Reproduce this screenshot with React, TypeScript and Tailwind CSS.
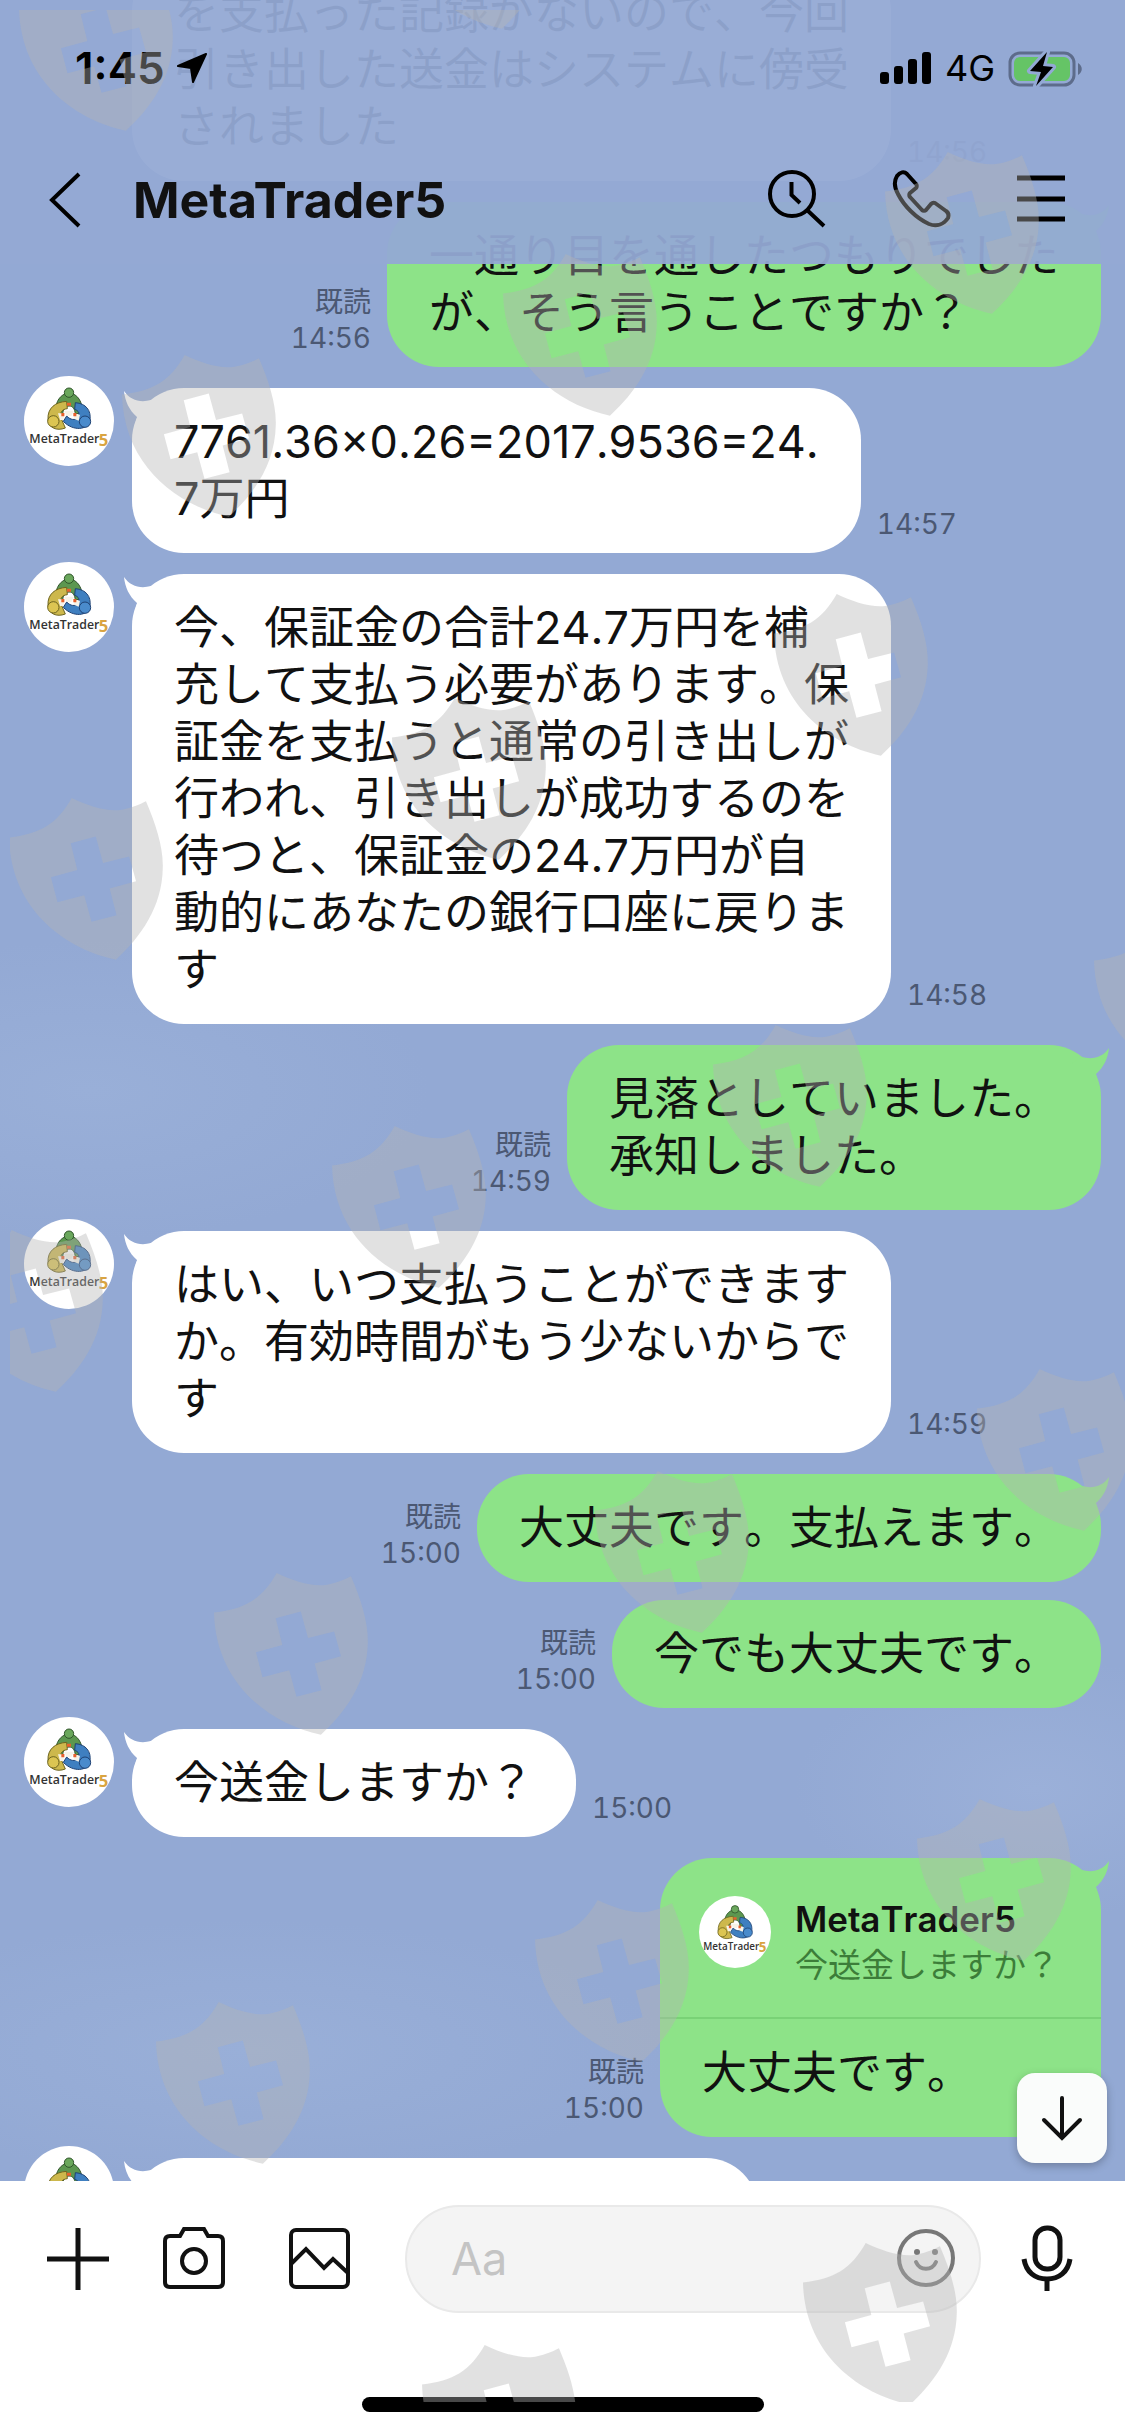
import type { ReactNode } from 'react'

type Message = {
  from: 'me' | 'them'
  text: string
  time: string
  follows?: boolean
  quote?: { name: string; text: string }
}

const messages: Message[] = [
  {
    from: 'them',
    text: 'を支払った記録がないので、今回\n引き出した送金はシステムに傍受\nされました',
    time: '14:56',
    follows: true,
  },
  {
    from: 'me',
    text: '一通り目を通したつもりでした\nが、そう言うことですか？',
    time: '14:56',
  },
  { from: 'them', text: '7761.36×0.26=2017.9536=24.\n7万円', time: '14:57' },
  {
    from: 'them',
    text: '今、保証金の合計24.7万円を補\n充して支払う必要があります。保\n証金を支払うと通常の引き出しが\n行われ、引き出しが成功するのを\n待つと、保証金の24.7万円が自\n動的にあなたの銀行口座に戻りま\nす',
    time: '14:58',
  },
  { from: 'me', text: '見落としていました。\n承知しました。', time: '14:59' },
  {
    from: 'them',
    text: 'はい、いつ支払うことができます\nか。有効時間がもう少ないからで\nす',
    time: '14:59',
  },
  { from: 'me', text: '大丈夫です。支払えます。', time: '15:00' },
  { from: 'me', text: '今でも大丈夫です。', time: '15:00', follows: true },
  { from: 'them', text: '今送金しますか？', time: '15:00' },
  {
    from: 'me',
    text: '大丈夫です。',
    time: '15:00',
    quote: { name: 'MetaTrader5', text: '今送金しますか？' },
  },
]

const shields = [
  [394, -133], [18, -31], [884, 152], [502, 254], [121, 355], [773, 594], [391, 698],
  [8, 798], [1093, 921], [712, 1025], [331, 1126], [-52, 1230], [976, 1369], [594, 1471],
  [213, 1573], [916, 1799], [534, 1900], [155, 2002], [802, 2243], [421, 2345],
]

function Avatar({ className }: { className: string }) {
  return (
    <svg viewBox="0 0 270 270" className={`shrink-0 rounded-full bg-white ${className}`} role="img" aria-label="MetaTrader 5">
      <g stroke="#31552c" strokeWidth="3">
        <path d="M135 50 C108 54 94 78 95 106 L116 118 C116 98 124 90 135 90 C147 90 152 98 154 114 L175 110 C176 78 162 54 135 50Z" fill="#5c9750" />
        <circle cx="135" cy="50" r="14" fill="#6aa75c" />
      </g>
      <g stroke="#6d6420" strokeWidth="3">
        <path d="M72 130 C70 96 94 78 128 76 L130 98 C114 100 108 108 110 124 L124 156 C98 166 74 156 72 130Z" fill="#cdb84c" />
        <circle cx="88" cy="136" r="17" fill="#dcc552" />
      </g>
      <g stroke="#1f4274" strokeWidth="3">
        <path d="M154 80 C186 82 202 104 198 132 C192 164 146 166 118 136 L128 120 C140 132 152 134 162 124 C168 112 164 104 152 100Z" fill="#3f7fc0" />
        <circle cx="183" cy="137" r="17" fill="#4a8bcc" />
      </g>
      <path d="M120 104 L150 104 L142 120 L128 120Z M102 112 L122 112 L118 132 L108 132Z M150 114 L168 116 L164 134 L150 128Z" fill="#f7f3e8" />
      <path d="M129 80h12v9h-12z M112 111h9v10h-9z M148 111h9v10h-9z" fill="#e8602c" />
      <text x="16" y="201" fontSize="37" fontWeight="600" fill="#333" fontFamily="'Open Sans', sans-serif">
        MetaTrader
      </text>
      <text x="224" y="211" fontSize="50" fontWeight="700" fill="#d9a441" fontFamily="'Open Sans', sans-serif">
        5
      </text>
    </svg>
  )
}

function Tail({ mine }: { mine: boolean }) {
  return (
    <svg
      viewBox="0 0 40 40"
      className={`absolute top-0 size-[40px] ${mine ? '-right-2 -scale-x-100 text-[#8de388]' : '-left-2 text-white'}`}
      aria-hidden="true"
    >
      <path d="M0 3 C6 12 16 15 27 12 L40 20 L40 40 L10 40 L13 29 C5 22 1 13 0 3Z" fill="currentColor" />
    </svg>
  )
}

function Bubble({ message }: { message: Message }) {
  const mine = message.from === 'me'
  const { quote } = message

  return (
    <div
      className={`relative rounded-[52px] text-[45px] leading-[57px] whitespace-pre text-[#111] [font-kerning:none] ${mine ? 'bg-[#8de388]' : 'bg-white'}`}
    >
      {!message.follows && <Tail mine={mine} />}
      {quote && (
        <div className="relative flex gap-6 border-b-2 border-[#79d276] pt-[38px] pr-[42px] pb-[29px] pl-[39px]">
          <Avatar className="size-[72px]" />
          <div>
            <p className="text-[35px] leading-[46px] font-semibold">{quote.name}</p>
            <p className="text-[33px] leading-[46px] text-[#3c7d39]">{quote.text}</p>
          </div>
        </div>
      )}
      <p className={`relative px-[42px] pt-[25px] ${quote ? 'pb-[36px]' : 'pb-[26px]'}`}>{message.text}</p>
    </div>
  )
}

function Row({ message }: { message: Message }) {
  const mine = message.from === 'me'

  return (
    <li className={`flex gap-4 ${message.follows ? 'mt-[18px]' : 'mt-[21px]'} ${mine ? 'flex-row-reverse pr-6' : 'pl-6'}`}>
      {!mine && (message.follows ? <div className="mr-[2px] w-[90px]" /> : <Avatar className="-mt-3 mr-[2px] size-[90px]" />)}
      <Bubble message={message} />
      <div className={`flex flex-col justify-end pb-[11px] text-[28px] leading-[36px] text-[#4b5873] ${mine ? 'text-right' : ''}`}>
        {mine && <span>既読</span>}
        <time className="tabular-nums">{message.time}</time>
      </div>
    </li>
  )
}

function IconButton({ label, className = '', children }: { label: string; className?: string; children: ReactNode }) {
  return (
    <button type="button" aria-label={label} className={`shrink-0 ${className}`}>
      {children}
    </button>
  )
}

function StatusBar() {
  return (
    <div className="flex h-[136px] items-center justify-between pr-[42px] pl-[75px] text-black">
      <div className="flex items-center gap-3">
        <span className="text-[44px] font-semibold">1:45</span>
        <svg viewBox="0 0 30 30" className="size-[30px]" aria-hidden="true">
          <path d="M29 1 L1 13 L14 15 L16 29Z" fill="currentColor" stroke="currentColor" strokeWidth="2" strokeLinejoin="round" />
        </svg>
      </div>
      <div className="flex items-center gap-[13px]">
        <svg viewBox="0 0 52 33" className="h-[33px] w-[52px]" aria-hidden="true">
          <rect x="0" y="20" width="9" height="12" rx="3" />
          <rect x="14" y="14" width="9" height="18" rx="3" />
          <rect x="28" y="7" width="9" height="25" rx="3" />
          <rect x="42" y="0" width="9" height="32" rx="3" />
        </svg>
        <span className="text-[36px]">4G</span>
        <svg viewBox="0 0 75 37" className="h-[37px] w-[75px]" aria-hidden="true">
          <rect x="2" y="3" width="64" height="32" rx="10" fill="none" stroke="#5d6c8b" strokeWidth="3" />
          <rect x="6" y="7" width="56" height="24" rx="6" fill="#65c466" />
          <path d="M70 13 C75 16 75 22 70 25Z" fill="#5d6c8b" />
          <path
            d="M39 2 L22 21 L33 22 L28 36 L45 17 L35 16Z"
            fill="#000"
            stroke="#93a9d4"
            strokeWidth="6"
            strokeLinejoin="round"
            paintOrder="stroke"
          />
        </svg>
      </div>
    </div>
  )
}

function Header() {
  return (
    <header className="absolute inset-x-0 top-0 bg-[#93a9d4]/95">
      <StatusBar />
      <div className="flex h-[128px] items-center pr-[60px] pl-[48px] text-black">
        <IconButton label="戻る">
          <svg viewBox="0 0 34 56" className="h-[56px] w-[34px]" fill="none" stroke="currentColor" strokeWidth="4">
            <path d="M31 2 L4 28 L31 54" />
          </svg>
        </IconButton>
        <h1 className="ml-[51px] flex-1 text-[50px] font-bold text-[#111]">MetaTrader5</h1>
        <div className="flex items-center gap-[65px]">
          <IconButton label="検索">
            <svg viewBox="0 0 60 60" className="size-[60px]" fill="none" stroke="currentColor" strokeWidth="4">
              <circle cx="25" cy="24" r="22" />
              <path d="M40 40 L57 56 M24.500 12 V25 L33 33" />
            </svg>
          </IconButton>
          <IconButton label="通話">
            <svg viewBox="0 0 60 60" className="size-[60px]" fill="none" stroke="currentColor" strokeWidth="4" strokeLinejoin="round">
              <path d="M15 4 C12 1 8 2 5 6 C2 11 2 17 6 24 C12 36 24 48 37 54 C45 57 52 54 56 48 C57 45 57 43 54 41 L43 33 C41 32 40 33 39 34 L34 40 C33 41 31 41 30 40 L18 27 C17 26 17 24 18 23 L24 18 C25 17 25 15 24 14Z" />
            </svg>
          </IconButton>
          <IconButton label="メニュー">
            <svg viewBox="0 0 48 60" className="h-[60px] w-[48px]" stroke="currentColor" strokeWidth="5">
              <path d="M0 8 H48 M0 29 H48 M0 49 H48" />
            </svg>
          </IconButton>
        </div>
      </div>
    </header>
  )
}

function Footer() {
  return (
    <footer className="bg-white pt-6 pb-6 text-[#111]">
      <div className="flex items-center pr-[46px] pl-[46px]">
        <div className="flex gap-[52px]">
          <IconButton label="追加">
            <svg viewBox="0 0 64 64" className="size-[64px]" stroke="currentColor" strokeWidth="5">
              <path d="M1 32 H63 M32 1 V63" />
            </svg>
          </IconButton>
          <IconButton label="カメラ">
            <svg viewBox="0 0 64 64" className="size-[64px]" fill="none" stroke="currentColor" strokeWidth="4">
              <path d="M8 9 H18 L22 2 H42 L46 9 H56 Q61 9 61 14 V55 Q61 60 56 60 H8 Q3 60 3 55 V14 Q3 9 8 9Z" />
              <circle cx="32" cy="34" r="12" />
            </svg>
          </IconButton>
          <IconButton label="写真" className="ml-[10px]">
            <svg viewBox="0 0 64 64" className="size-[64px]" fill="none" stroke="currentColor" strokeWidth="4">
              <rect x="3" y="3" width="57" height="57" rx="5" />
              <path d="M3 37 L18 22 L36 41 L45 32 L60 46" />
            </svg>
          </IconButton>
        </div>
        <label className="ml-[53px] flex h-[108px] min-w-0 flex-1 items-center rounded-full border-2 border-[#e9e9e9] bg-[#f4f4f4] pr-[21px] pl-[44px]">
          <input
            aria-label="メッセージを入力"
            placeholder="Aa"
            className="min-w-0 flex-1 text-[45px] outline-none placeholder:text-[#c4c4c4]"
          />
          <IconButton label="スタンプ" className="text-[#777]">
            <svg viewBox="0 0 64 64" className="size-[64px]" fill="none" stroke="currentColor" strokeWidth="4" strokeLinecap="round">
              <circle cx="32" cy="31" r="27" />
              <path d="M22 35 C26 44 38 44 42 35" />
              <circle cx="23" cy="25" r="3" fill="currentColor" stroke="none" />
              <circle cx="41" cy="25" r="3" fill="currentColor" stroke="none" />
            </svg>
          </IconButton>
        </label>
        <IconButton label="音声" className="ml-[34px]">
          <svg viewBox="0 0 64 68" className="h-[68px] w-[64px]" fill="none" stroke="currentColor" strokeWidth="5">
            <rect x="20" y="3" width="25" height="41" rx="12" />
            <path d="M9 34 C11 47 20 54 32 54 C44 54 53 47 55 34 M32 54 V66" />
          </svg>
        </IconButton>
      </div>
      <div className="mx-auto mt-[84px] h-[15px] w-[402px] rounded-full bg-black" />
    </footer>
  )
}

function Shields() {
  return (
    <div className="pointer-events-none absolute inset-x-0 top-[10px] bottom-[34px] overflow-hidden pl-[10px]">
      <svg className="size-full overflow-hidden" aria-hidden="true">
        {shields.map(([x, y]) => (
          <path
            key={`${x},${y}`}
            transform={`translate(${x - 9} ${y - 10}) scale(0.33)`}
            fill="#b4b4b4"
            fillOpacity="0.4"
            fillRule="evenodd"
            d="M0 120 C95 108 145 80 190 0 C235 22 290 40 330 37 C365 34 395 20 415 10 C445 80 468 150 466 212 C464 330 400 420 324 490 C160 455 5 330 0 120Z M187 137 L263 117 L285 197 L364 177 L385 252 L305 274 L326 355 L250 375 L228 295 L147 316 L127 240 L207 218Z"
          />
        ))}
      </svg>
    </div>
  )
}

export default function App() {
  return (
    <div className="relative flex h-screen flex-col overflow-hidden bg-[#93a9d4] font-['Inter','Noto_Sans_CJK_JP',sans-serif]">
      <main className="relative min-h-0 flex-1 overflow-hidden bg-[radial-gradient(ellipse_340px_150px_at_8%_50%,#99afd8,transparent),radial-gradient(ellipse_240px_130px_at_92%_82%,#9bb0d9,transparent),radial-gradient(ellipse_420px_130px_at_22%_94%,#99afd8,transparent)]">
        <ul className="-mt-[59px]">
          {messages.map((message, index) => (
            <Row key={index} message={message} />
          ))}
          <li className="mt-[21px] flex gap-4 pl-6">
            <Avatar className="-mt-3 mr-[2px] size-[90px]" />
            <div className="relative h-[108px] w-[626px] rounded-[52px] bg-white">
              <Tail mine={false} />
            </div>
          </li>
        </ul>
        <IconButton
          label="最新のメッセージへ"
          className="absolute right-[18px] bottom-[18px] flex size-[90px] items-center justify-center rounded-[18px] bg-[#fafcfb] text-[#111] shadow-[0_3px_8px_rgba(0,0,0,0.25)]"
        >
          <svg viewBox="0 0 48 48" className="size-[48px]" fill="none" stroke="currentColor" strokeWidth="4" strokeLinecap="round">
            <path d="M24 4 V43 M6 26 L24 44 L42 26" />
          </svg>
        </IconButton>
      </main>
      <Footer />
      <Header />
      <Shields />
    </div>
  )
}
